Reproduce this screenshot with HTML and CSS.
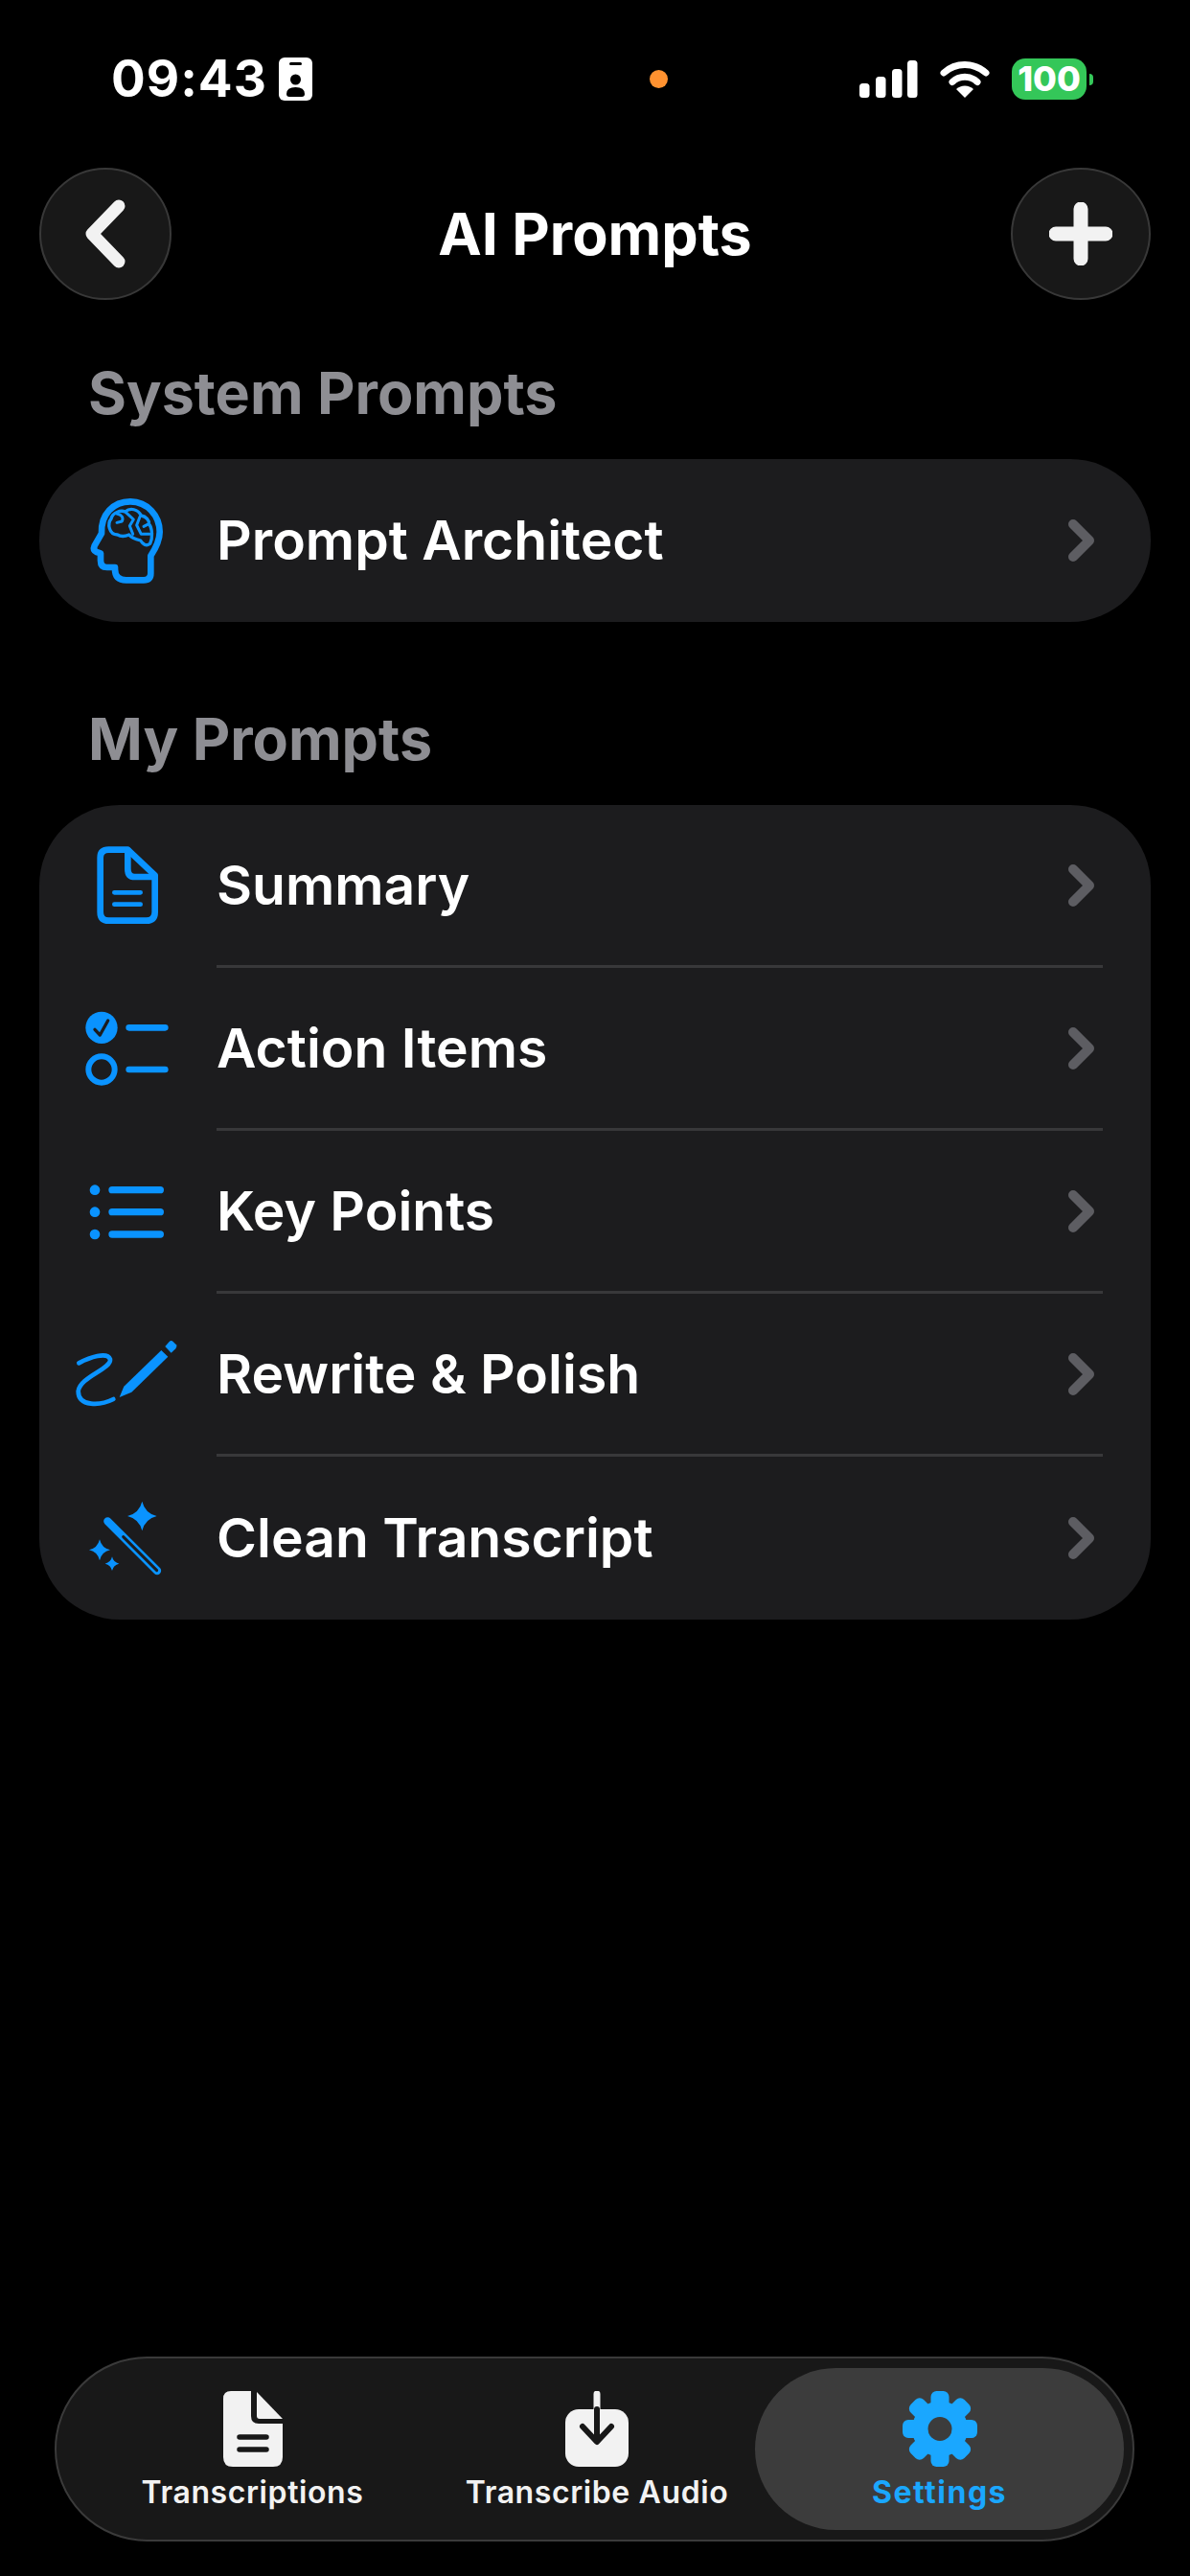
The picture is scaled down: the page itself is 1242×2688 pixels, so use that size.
FILE: index.html
```html
<!DOCTYPE html>
<html lang="en">
<head>
<meta charset="utf-8">
<title>AI Prompts</title>
<link rel="stylesheet" href="styles.css">
</head>
<body>
<div class="page">
  <div class="status">
    <div class="status-left">
      <span class="time">09:43</span>
      <svg class="badge" viewBox="0 0 35 45"><rect width="35" height="45" rx="6" fill="#fff"/><rect x="11" y="5" width="13" height="3" rx="1.5" fill="#000"/><circle cx="17.5" cy="23" r="5.5" fill="#000"/><path d="M8 38Q8 31 17.5 31Q27 31 27 38Q27 41 24 41H11Q8 41 8 38Z" fill="#000"/></svg>
    </div>
    <span class="dot"></span>
    <div class="status-right">
      <svg class="signal" viewBox="0 0 61 39"><rect y="24" width="10.500" height="15" rx="3.500" fill="#fff"/><rect x="17" y="17" width="10.500" height="22" rx="3.500" fill="#fff"/><rect x="34" y="9" width="10.500" height="30" rx="3.500" fill="#fff"/><rect x="50" width="10.500" height="39" rx="3.500" fill="#fff"/></svg>
      <svg class="wifi" viewBox="0 0 52 39"><path d="M4 13A33 33 0 0 1 48 13" fill="none" stroke="#fff" stroke-width="7" stroke-linecap="round"/><path d="M13 22.500A19 19 0 0 1 39 22.500" fill="none" stroke="#fff" stroke-width="7" stroke-linecap="round"/><path d="M26 39L17 30A13 13 0 0 1 35 30Z" fill="#fff"/></svg>
      <div class="battery"><span class="battery-level">100</span><span class="battery-nub"></span></div>
    </div>
  </div>

  <header class="nav">
    <button class="nav-btn back"><svg width="44" height="72" viewBox="0 0 44 72"><path d="M36 7L8 36L36 65" fill="none" stroke="#f2f2f2" stroke-width="13" stroke-linecap="round" stroke-linejoin="round"/></svg></button>
    <h1 class="title">AI Prompts</h1>
    <button class="nav-btn add"><svg width="66" height="66" viewBox="0 0 66 66"><path d="M33 7V59M7 33H59" fill="none" stroke="#f2f2f2" stroke-width="15" stroke-linecap="round"/></svg></button>
  </header>

  <h2 class="section first">System Prompts</h2>
  <div class="card">
    <div class="row">
      <div class="row-icon"><svg class="ico" viewBox="126 132 360 300"><g fill="none" stroke="#0a93ff" stroke-linecap="round" stroke-linejoin="round"><path stroke-width="20" d="M382 330V385Q382 406 360 406H305Q270 406 270 372V366H245Q225 366 225 345V322L212 318Q200 312 206 298L228 260C225 200 265 160 318 160C372 160 410 205 410 255C410 285 395 310 382 330Z"/><path stroke-width="10" d="M278 264C250 264 246 228 258 214C262 194 288 186 302 192C318 178 342 184 352 204C368 206 378 220 376 230C388 244 388 276 380 292C368 302 356 292 350 282C335 278 322 274 314 264C300 270 288 270 278 264Z"/><path stroke-width="9" d="M276 198Q300 204 292 222L276 226M304 194L328 216L316 236L326 262M348 208L338 234L352 262L378 262M360 238L376 230"/></g></svg></div>
      <div class="row-main"><span class="label">Prompt Architect</span><svg class="chev" viewBox="0 0 28 44"><path d="M5 5L22 22L5 39"/></svg></div>
    </div>
  </div>

  <h2 class="section">My Prompts</h2>
  <div class="card">
    <div class="row">
      <div class="row-icon"><svg class="ico" viewBox="66 75 360 300"><g fill="none" stroke="#0a93ff" stroke-linecap="round" stroke-linejoin="round"><path stroke-width="20" d="M190 110H250L335 190V305Q335 332 308 332H190Q164 332 164 305V135Q164 110 190 110Z"/><path stroke-width="20" d="M250 112V170Q250 195 272 195H333"/><path stroke-width="14" d="M208 244H290M208 281H290"/></g></svg></div>
      <div class="row-main sep"><span class="label">Summary</span><svg class="chev" viewBox="0 0 28 44"><path d="M5 5L22 22L5 39"/></svg></div>
    </div>
    <div class="row">
      <div class="row-icon"><svg class="ico" viewBox="66 585 360 300"><circle cx="168" cy="667" r="50" fill="#0a93ff"/><path d="M147 673L163 690L188 645" fill="none" stroke="#1c1c1e" stroke-width="10" stroke-linecap="round" stroke-linejoin="round"/><circle cx="168" cy="798" r="41" fill="none" stroke="#0a93ff" stroke-width="18"/><path d="M254 667H367M254 798H367" fill="none" stroke="#0a93ff" stroke-width="20" stroke-linecap="round"/></svg></div>
      <div class="row-main sep"><span class="label">Action Items</span><svg class="chev" viewBox="0 0 28 44"><path d="M5 5L22 22L5 39"/></svg></div>
    </div>
    <div class="row">
      <div class="row-icon"><svg class="ico" viewBox="66 195 360 300"><g fill="#0a93ff"><circle cx="147" cy="275" r="16"/><circle cx="147" cy="344" r="16"/><circle cx="147" cy="414" r="16"/></g><path d="M201 275H352M201 344H352M201 414H352" fill="none" stroke="#0a93ff" stroke-width="22" stroke-linecap="round"/></svg></div>
      <div class="row-main sep"><span class="label">Key Points</span><svg class="chev" viewBox="0 0 28 44"><path d="M5 5L22 22L5 39"/></svg></div>
    </div>
    <div class="row">
      <div class="row-icon"><svg class="ico" viewBox="66 705 360 300"><path d="M97 817C130 800 185 780 195 805C200 835 100 860 95 905C95 955 165 950 205 930" fill="none" stroke="#0a93ff" stroke-width="14" stroke-linecap="round"/><path d="M224 924L238 890L355 777L376 797L262 908Z" fill="#0a93ff"/><path d="M367 765L380 750Q386 744 392 750L402 760Q406 766 400 772L386 785Z" fill="#0a93ff"/></svg></div>
      <div class="row-main sep"><span class="label">Rewrite &amp; Polish</span><svg class="chev" viewBox="0 0 28 44"><path d="M5 5L22 22L5 39"/></svg></div>
    </div>
    <div class="row">
      <div class="row-icon"><svg class="ico" viewBox="66 1215 360 300"><path d="M187 1312L342 1467" fill="none" stroke="#0a93ff" stroke-width="25" stroke-linecap="round"/><path d="M236 1361L341 1466" fill="none" stroke="#1c1c1e" stroke-width="9" stroke-linecap="round"/><g fill="#0a93ff"><path d="M295 1250Q304 1287 341 1296Q304 1305 295 1342Q286 1305 249 1296Q286 1287 295 1250Z"/><path d="M162 1369Q168 1396 195 1402Q168 1408 162 1435Q156 1408 129 1402Q156 1396 162 1369Z"/><path d="M201 1423Q205 1441 223 1445Q205 1449 201 1467Q197 1449 179 1445Q197 1441 201 1423Z"/></g></svg></div>
      <div class="row-main"><span class="label">Clean Transcript</span><svg class="chev" viewBox="0 0 28 44"><path d="M5 5L22 22L5 39"/></svg></div>
    </div>
  </div>

  <nav class="tabbar">
    <div class="tab">
      <svg class="tab-icon" width="62" height="79" viewBox="0 0 62 79"><path d="M8 0H29V26Q29 34 37 34H62V69Q62 79 52 79H10Q0 79 0 69V8Q0 0 8 0Z" fill="#f2f2f2"/><path d="M35 1L62 29H38Q35 29 35 26Z" fill="#f2f2f2"/><path d="M17 48H45M17 61H45" fill="none" stroke="#181818" stroke-width="5.500" stroke-linecap="round"/></svg>
      <span class="tab-label">Transcriptions</span>
    </div>
    <div class="tab">
      <svg class="tab-icon" width="66" height="79" viewBox="0 0 66 79"><rect y="19" width="66" height="60" rx="14" fill="#f2f2f2"/><path d="M33 3V19" stroke="#f2f2f2" stroke-width="7" stroke-linecap="round"/><path d="M33 19V50M18 37L33 53L48 37" fill="none" stroke="#181818" stroke-width="6" stroke-linecap="round" stroke-linejoin="round"/></svg>
      <span class="tab-label">Transcribe Audio</span>
    </div>
    <div class="tab active">
      <svg class="tab-icon" width="78" height="79" viewBox="-39 -39.500 78 79"><g fill="#1aa7ff"><circle r="29"/><rect x="-9.500" y="-39.500" width="19" height="79" rx="6"/><rect x="-9.500" y="-39.500" width="19" height="79" rx="6" transform="rotate(45)"/><rect x="-9.500" y="-39" width="19" height="78" rx="6" transform="rotate(90)"/><rect x="-9.500" y="-39.500" width="19" height="79" rx="6" transform="rotate(135)"/></g><circle r="12.500" fill="#3c3c3c"/></svg>
      <span class="tab-label">Settings</span>
    </div>
  </nav>
</div>
</body>
</html>
```

FILE: styles.css
```css
* { box-sizing: border-box; }
html, body { margin: 0; padding: 0; background: #000; }
.page {
  width: 1242px;
  height: 2688px;
  display: flex;
  flex-direction: column;
  background: #000;
  color: #fff;
  font-family: Inter, "Liberation Sans", sans-serif;
  overflow: hidden;
}

/* status bar */
.status {
  height: 175px;
  padding: 60px 101px 0 116px;
  display: grid;
  grid-template-columns: 562px auto 1fr;
  align-items: start;
}
.status-left { display: flex; align-items: center; gap: 12px; height: 45px; }
.time { font-size: 53px; font-weight: 700; line-height: 45px; letter-spacing: 1px; color: #fff; }
.badge { width: 35px; height: 45px; }
.dot { width: 19px; height: 19px; margin-top: 13px; border-radius: 50%; background: #ff9230; }
.status-right { display: flex; justify-content: flex-end; align-items: center; height: 45px; gap: 23px; }
.signal { width: 61px; height: 39px; }
.wifi { width: 52px; height: 39px; }
.battery { display: flex; align-items: center; gap: 3px; }
.battery-level {
  width: 78px; height: 43px; border-radius: 14px; background: #34c759;
  color: #fff; font-size: 36px; font-weight: 800; line-height: 43px; text-align: center;
}
.battery-nub { width: 4px; height: 12px; border-radius: 0 6px 6px 0; background: #34c759; }

/* nav */
.nav {
  height: 138px;
  margin: 0 41px;
  display: grid;
  grid-template-columns: 1fr auto 1fr;
  align-items: center;
}
.nav-btn {
  height: 138px;
  padding: 0;
  display: flex;
  align-items: center;
  justify-content: center;
  border: 2px solid #383838;
  border-radius: 50%;
  background: #181818;
}
.back { width: 138px; justify-self: start; }
.add { width: 146px; justify-self: end; }
.title { margin: 0; font-size: 61px; font-weight: 700; line-height: 70px; color: #fff; }

/* sections */
.section {
  margin: 87px 0 34px 92px;
  font-size: 61px;
  font-weight: 700;
  line-height: 70px;
  color: #8e8e93;
}
.section.first { margin-top: 62px; }
.card {
  margin: 0 41px;
  border-radius: 84px;
  background: #1c1c1e;
  overflow: hidden;
}
.row { height: 170px; display: flex; }
.row-icon { width: 185px; display: flex; align-items: center; justify-content: flex-start; padding-left: 31px; }
.ico { width: 120px; height: 100px; flex: none; }
.row-main {
  flex: 1;
  margin-right: 50px;
  display: flex;
  align-items: center;
  justify-content: space-between;
}
.row-main.sep { border-bottom: 3px solid #38383a; }
.label { font-size: 57px; font-weight: 600; color: #fff; line-height: 70px; }
.chev { width: 28px; height: 44px; margin-right: 8px; }
.chev path { fill: none; stroke: #5d5d62; stroke-width: 10; stroke-linecap: round; stroke-linejoin: round; }

/* tab bar */
.tabbar {
  margin: auto 58px 36px 57px;
  height: 193px;
  padding: 10px 9px 10px 10px;
  display: grid;
  grid-template-columns: 389px 1fr 385px;
  border: 2px solid #3a3a3a;
  border-radius: 97px;
  background: #181818;
}
.tab {
  display: flex;
  flex-direction: column;
  align-items: center;
  padding-top: 24px;
  border-radius: 85px;
}
.tab.active { background: #3c3c3c; }
.tab-icon { display: block; flex: none; }
.tab-label {
  margin-top: 7px;
  font-size: 32px;
  font-weight: 600;
  line-height: 40px;
  letter-spacing: 0.6px;
  color: #f2f2f2;
}
.tab.active .tab-label { color: #1aa7ff; font-weight: 700; letter-spacing: 1.5px; }
```
